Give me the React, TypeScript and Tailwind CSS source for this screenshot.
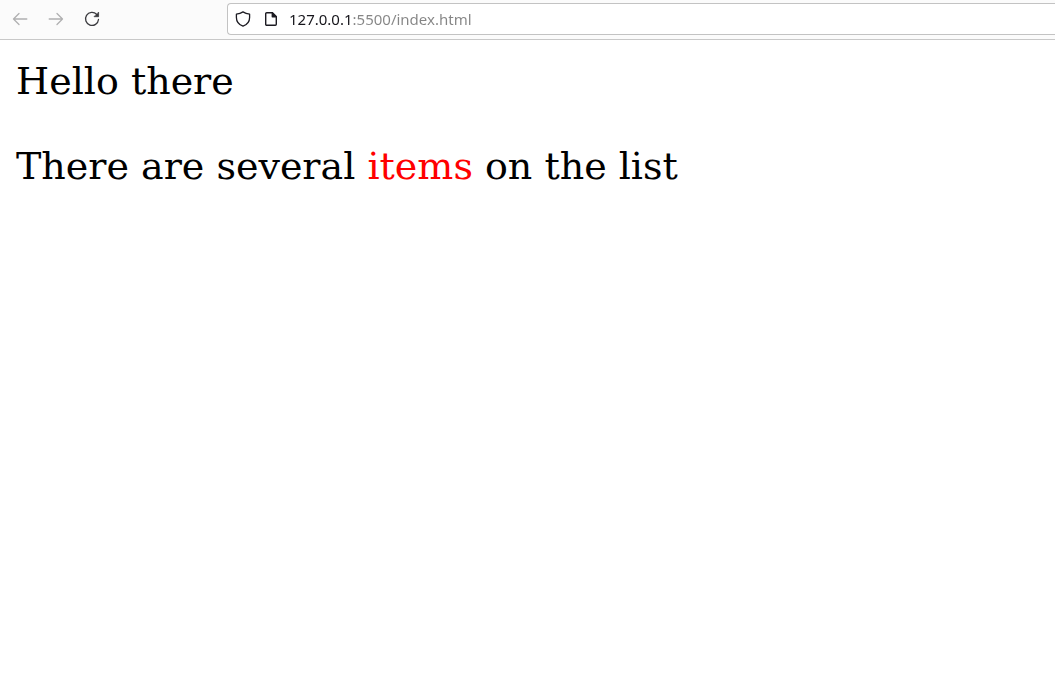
import React from "react";

function ToolbarButton({ label, disabled, children }: { label: string; disabled?: boolean; children: React.ReactNode }) {
  return (
    <button
      type="button"
      aria-label={label}
      disabled={disabled}
      className="flex size-9 items-center justify-center text-[#3a3a3e] disabled:text-[#b0b0b1]"
    >
      <svg viewBox="0 0 16 16" className="size-4" fill="none" stroke="currentColor" strokeWidth="1.3" strokeLinecap="round" strokeLinejoin="round" aria-hidden="true">
        {children}
      </svg>
    </button>
  );
}

function AddressBar() {
  return (
    <div className="flex h-8 flex-1 items-center rounded-l border border-r-0 border-[#c3c3c3] bg-white pl-[7px] text-[#1c1b22]">
      <svg viewBox="0 0 16 16" className="size-4 shrink-0" fill="none" stroke="currentColor" strokeWidth="1.3" strokeLinejoin="round" aria-hidden="true">
        <path d="M8 .9C10 2.200 12.300 2.900 14.600 3.200V6.500C14.600 10.600 12 13.700 8 15.200C4 13.700 1.400 10.600 1.400 6.500V3.200C3.700 2.900 6 2.200 8 .9Z" />
      </svg>
      <svg viewBox="0 0 16 16" className="ml-3 size-4 shrink-0" fill="none" stroke="currentColor" strokeWidth="1.4" strokeLinejoin="round" aria-hidden="true">
        <path d="M3.700 1.700H9.300L13.300 5.700V13.300A1 1 0 0 1 12.300 14.300H3.700A1 1 0 0 1 2.700 13.300V2.700A1 1 0 0 1 3.700 1.700Z" />
        <path d="M9.300 1.700V5.700H13.300Z" fill="currentColor" />
      </svg>
      <input
        type="text"
        aria-label="Address"
        defaultValue="127.0.0.1:5500/index.html"
        spellCheck={false}
        className="ml-[10px] h-full min-w-0 flex-1 bg-[linear-gradient(to_right,#15141a_63px,#858585_63px)] bg-clip-text font-['Noto_Sans',sans-serif] text-[15px] text-transparent caret-black outline-none"
      />
    </div>
  );
}

export default function App() {
  return (
    <div className="min-h-screen bg-white">
      <header className="flex h-10 items-center border-b border-[#c8c8c8] bg-[#fbfbfb] pb-px pl-0.5">
        <nav aria-label="Browser navigation" className="mr-[117px] flex">
          <ToolbarButton label="Back" disabled>
            <path d="M14.800 8H1.500M7 2.500 1.500 8 7 13.500" />
          </ToolbarButton>
          <ToolbarButton label="Forward" disabled>
            <path d="M1.200 8H14.500M9 2.500 14.500 8 9 13.500" />
          </ToolbarButton>
          <ToolbarButton label="Reload">
            <path d="M12.700 3.400A6.500 6.500 0 1 0 14.500 8.500" />
            <path d="M14.600 1.500V5.700H10.400Z" fill="currentColor" strokeWidth="0.8" />
          </ToolbarButton>
        </nav>
        <AddressBar />
      </header>
      <main className="flex flex-col gap-10 px-4 pt-[19px] font-['DejaVu_Serif',serif] text-[38px] leading-[45px] text-black">
        <p>Hello there</p>
        <p>
          There are several <span className="text-[#ff0000]">items</span> on the list
        </p>
      </main>
    </div>
  );
}
